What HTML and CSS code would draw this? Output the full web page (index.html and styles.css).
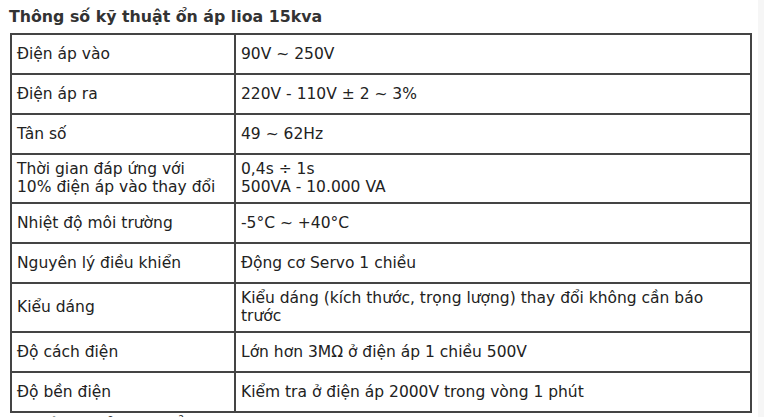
FILE: index.html
```html
<!DOCTYPE html>
<html lang="vi">
<head>
<meta charset="utf-8">
<title>Thông số kỹ thuật ổn áp lioa 15kva</title>
<link rel="stylesheet" href="styles.css">
</head>
<body>
<div class="page">
  <h3 class="heading">Thông số kỹ thuật ổn áp lioa 15kva</h3>
  <table class="spec">
    <tr><td class="label">Điện áp vào</td><td>90V ~ 250V</td></tr>
    <tr><td class="label">Điện áp ra</td><td>220V - 110V ± 2 ~ 3%</td></tr>
    <tr><td class="label">Tân số</td><td>49 ~ 62Hz</td></tr>
    <tr class="tall"><td class="label">Thời gian đáp ứng với<br>10% điện áp vào thay đổi</td><td>0,4s ÷ 1s<br>500VA - 10.000 VA</td></tr>
    <tr><td class="label">Nhiệt độ môi trường</td><td>-5°C ~ +40°C</td></tr>
    <tr><td class="label">Nguyên lý điều khiển</td><td>Động cơ Servo 1 chiều</td></tr>
    <tr class="tall"><td class="label">Kiểu dáng</td><td>Kiểu dáng (kích thước, trọng lượng) thay đổi không cần báo trước</td></tr>
    <tr><td class="label">Độ cách điện</td><td>Lớn hơn 3MΩ ở điện áp 1 chiều 500V</td></tr>
    <tr><td class="label">Độ bền điện</td><td>Kiểm tra ở điện áp 2000V trong vòng 1 phút</td></tr>
  </table>
  <h3 class="heading next">Lưu ý khi sử dụng ổn áp lioa 15kva</h3>
</div>
</body>
</html>
```
FILE: styles.css
```css
html, body {
  margin: 0;
  padding: 0;
  background: #f6f6f6;
}
.page {
  width: 758px;
  background: #ffffff;
  padding: 6px 0 20px 10px;
  box-sizing: border-box;
  font-family: "DejaVu Sans", Verdana, sans-serif;
  color: #222;
}
.heading {
  margin: 0 0 6px -1px;
  font-size: 15.8px;
  line-height: 21px;
  font-weight: bold;
  color: #333;
}
.heading.next {
  margin-top: 1px;
}
.spec {
  border-collapse: collapse;
  width: 742px;
  font-size: 15.5px;
  line-height: 18px;
}
.spec td {
  border: 2px solid #444;
  padding: 0 5px;
  height: 38px;
  vertical-align: middle;
  color: #222;
}
.spec tr.tall td {
  padding: 5px 5px 6px;
  height: auto;
}
.spec td.label {
  width: 212px;
}
```
